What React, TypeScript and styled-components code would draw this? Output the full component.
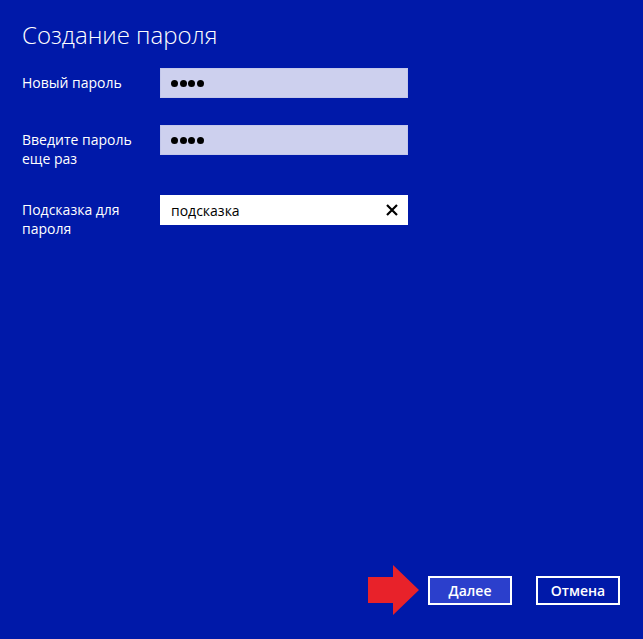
import styled, { createGlobalStyle } from 'styled-components'

const GlobalStyle = createGlobalStyle`
  html, body {
    margin: 0;
    padding: 0;
    background: #0019a9;
  }
  body {
    font-family: 'Open Sans', 'Noto Sans', sans-serif;
    color: #fff;
  }
`

const fields = [
  { label: 'Новый пароль', value: '1234', secret: true },
  { label: 'Введите пароль еще раз', value: '1234', secret: true },
  { label: 'Подсказка для пароля', value: 'подсказка', secret: false },
]

export default function App () {
  return (
    <>
      <GlobalStyle />
      <Page>
        <Title>Создание пароля</Title>
        <Form>
          {fields.map(f => (
            <Row key={f.label}>
              <Label>{f.label}</Label>
              <Field $secret={f.secret}>
                {f.secret ? (
                  <Dots aria-label="пароль">
                    {f.value.split('').map((_, i) => <Dot key={i} />)}
                  </Dots>
                ) : (
                  <span>{f.value}</span>
                )}
                {!f.secret && (
                  <ClearButton type="button" aria-label="Очистить">
                    <svg width="12" height="12" viewBox="0 0 12 12">
                      <path d="M1 1 L11 11 M11 1 L1 11" stroke="#000" strokeWidth="2.2" />
                    </svg>
                  </ClearButton>
                )}
              </Field>
            </Row>
          ))}
        </Form>
        <Footer>
          <svg width="51" height="50" viewBox="0 0 51 50">
            <path d="M0 12 H25 V0 L51 25 L25 50 V38 H0 Z" fill="#e8222a" />
          </svg>
          <Button $primary>Далее</Button>
          <Button>Отмена</Button>
        </Footer>
      </Page>
    </>
  )
}

const Page = styled.main`
  display: flex;
  flex-direction: column;
  height: 100vh;
  box-sizing: border-box;
  padding: 18px 23px 24px 22px;
`

const Title = styled.h1`
  margin: 0;
  font-size: 24px;
  font-weight: 300;
  line-height: 34px;
`

const Form = styled.div`
  display: grid;
  grid-template-columns: 138px 248px;
  row-gap: 27px;
  margin-top: 16px;
`

const Row = styled.div`
  display: contents;
`

const Label = styled.div`
  font-size: 14px;
  line-height: 19px;
  padding-top: 5px;
  width: 118px;
`

const Field = styled.div<{ $secret?: boolean }>`
  height: 30px;
  box-sizing: border-box;
  display: flex;
  align-items: center;
  justify-content: space-between;
  padding: 0 10px;
  background: ${p => (p.$secret ? '#cdd0ee' : '#fff')};
  border: 1px solid ${p => (p.$secret ? '#c3c7ea' : '#fff')};
  color: #000;
  font-size: 14px;
`

const Dots = styled.div`
  display: flex;
  gap: 1.5px;
  margin-top: 1px;
`

const Dot = styled.span`
  width: 7px;
  height: 7px;
  border-radius: 50%;
  background: #000;
`

const ClearButton = styled.button`
  border: none;
  background: transparent;
  padding: 0;
  margin-right: -1px;
  display: flex;
  align-items: center;
`

const Footer = styled.div`
  margin-top: auto;
  display: flex;
  align-items: center;
  justify-content: flex-end;
  gap: 24px;

  svg {
    margin-right: -15px;
  }
`

const Button = styled.button<{ $primary?: boolean }>`
  width: 84px;
  height: 29px;
  box-sizing: border-box;
  border: 2px solid #fff;
  background: ${p => (p.$primary ? '#2b3fcc' : 'transparent')};
  color: #fff;
  font-family: 'Open Sans', 'Noto Sans', sans-serif;
  font-size: 14px;
  font-weight: 600;
  padding: 0;
`
